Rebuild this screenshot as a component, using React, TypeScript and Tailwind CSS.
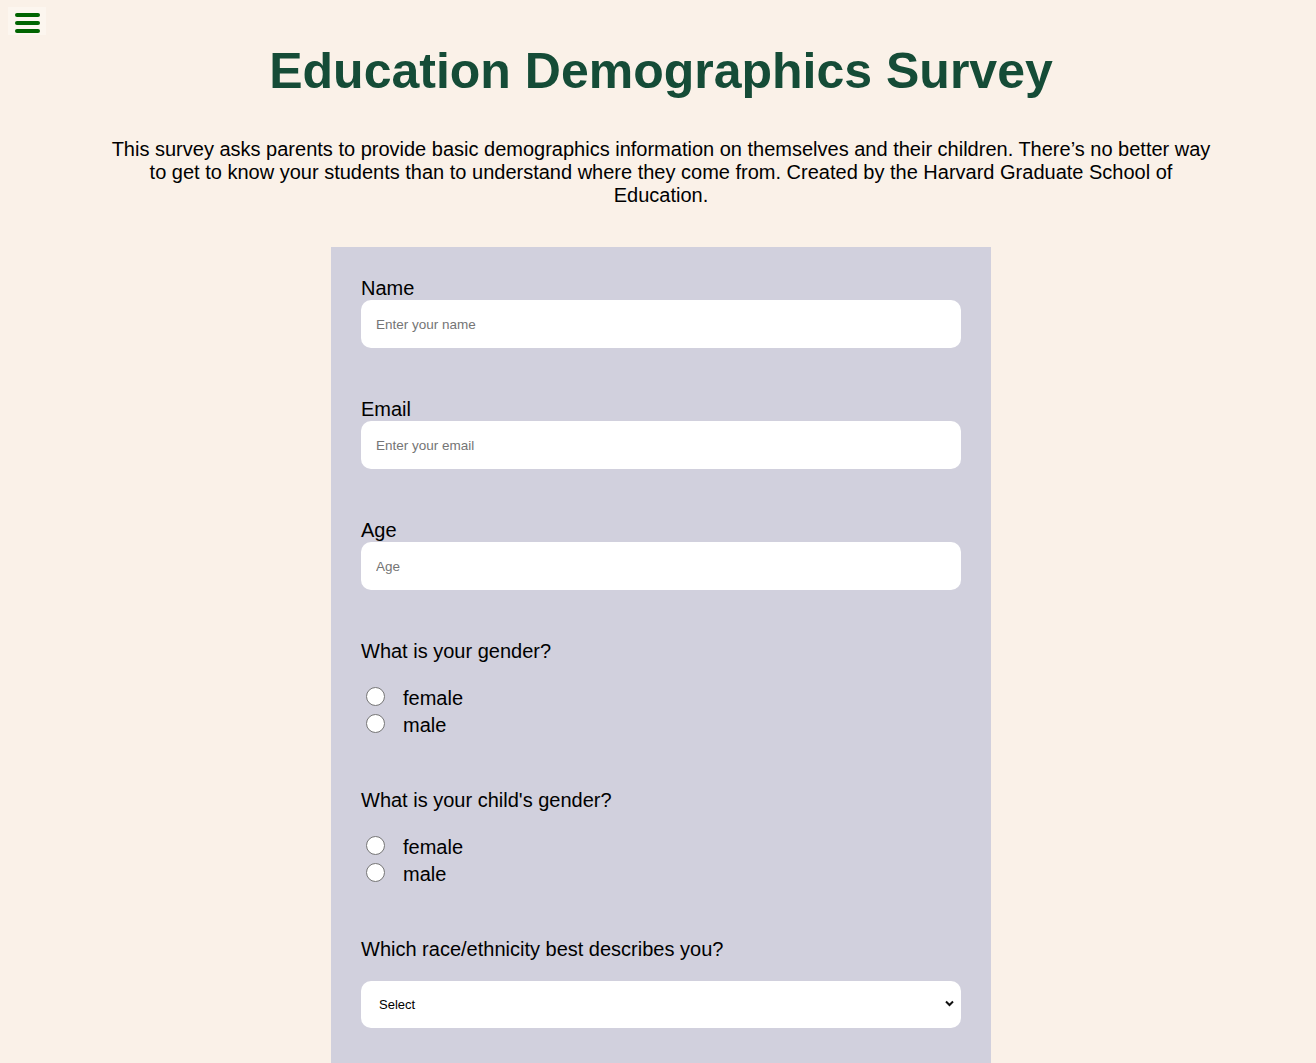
import { useState } from 'react';

type Field = { label: string; placeholder: string; type: string };

const fields: Field[] = [
  { label: 'Name', placeholder: 'Enter your name', type: 'text' },
  { label: 'Email', placeholder: 'Enter your email', type: 'email' },
  { label: 'Age', placeholder: 'Age', type: 'number' },
];

const RadioGroup = ({ name, question }: { name: string; question: string }) => {
  const [value, setValue] = useState<string>('');
  return (
    <div className="flex flex-col">
      <p className="leading-[23px]">{question}</p>
      <div className="mt-[22px] flex flex-col">
        {['female', 'male'].map((opt) => (
          <label key={opt} className="flex h-[27px] cursor-pointer items-center">
            <input
              type="radio"
              name={name}
              value={opt}
              checked={value === opt}
              onChange={() => setValue(opt)}
              className="sr-only"
            />
            {/* custom radio circle */}
            <span className="mb-[5px] ml-[5px] flex h-[19px] w-[19px] items-center justify-center rounded-full border border-[#767676] bg-white">
              {value === opt && <span className="h-[9px] w-[9px] rounded-full bg-[#0075ff]" />}
            </span>
            <span className="ml-[18px] leading-[23px]">{opt}</span>
          </label>
        ))}
      </div>
    </div>
  );
};

const App = () => {
  const [menuOpen, setMenuOpen] = useState<boolean>(false);

  return (
    <div className="relative min-h-screen bg-[#faf1e8] pb-10 pl-[6px] font-['Liberation_Sans',Arial,sans-serif] text-black">
      {/* menu toggle */}
      <button
        onClick={() => setMenuOpen(!menuOpen)}
        className="absolute left-[8px] top-[7px] flex h-[28px] w-[38px] flex-col items-center justify-start gap-[4px] bg-[#fcf6ef] pt-[6px]"
        aria-label="menu"
      >
        <span className="h-[4px] w-[25px] rounded-full bg-[#006400]" />
        <span className="h-[4px] w-[25px] rounded-full bg-[#006400]" />
        <span className="h-[4px] w-[25px] rounded-full bg-[#006400]" />
      </button>

      <h1 className="pt-[46px] text-center text-[50px] font-bold leading-[50px] text-[#154c37]">
        Education Demographics Survey
      </h1>

      <p className="mt-[42px] px-[100px] text-center text-[20px] leading-[23px]">
        This survey asks parents to provide basic demographics information on themselves and their children. There’s no
        better way to get to know your students than to understand where they come from. Created by the Harvard Graduate
        School of Education.
      </p>

      <form className="mx-auto mt-[40px] flex w-[660px] flex-col gap-[50px] bg-[#d1d0dd] px-[30px] pb-[60px] pt-[30px] text-[20px]">
        {fields.map((f) => (
          <div key={f.label} className="flex flex-col">
            <label className="leading-[23px]">{f.label}</label>
            <input
              type={f.type}
              placeholder={f.placeholder}
              className="h-[48px] w-full rounded-[10px] bg-white px-[15px] text-[13.5px] outline-none placeholder:text-[#757575]"
            />
          </div>
        ))}

        <RadioGroup name="gender" question="What is your gender?" />
        <RadioGroup name="childGender" question="What is your child's gender?" />

        <div className="flex flex-col">
          <label className="leading-[23px]">Which race/ethnicity best describes you?</label>
          <div className="relative mt-[20px]">
            <select className="h-[47px] w-full appearance-none rounded-[10px] bg-white pl-[18px] text-[13px] text-black outline-none">
              <option>Select</option>
              <option>White</option>
              <option>Black or African American</option>
              <option>Hispanic or Latino</option>
              <option>Asian</option>
              <option>Other</option>
            </select>
            <svg
              className="pointer-events-none absolute right-[7px] top-[19px]"
              width="9"
              height="7"
              viewBox="0 0 9 7"
              fill="none"
            >
              <path d="M1 1.5l3.5 3.5L8 1.5" stroke="#111" strokeWidth="2" />
            </svg>
          </div>
        </div>
      </form>
    </div>
  );
};

export default App;
